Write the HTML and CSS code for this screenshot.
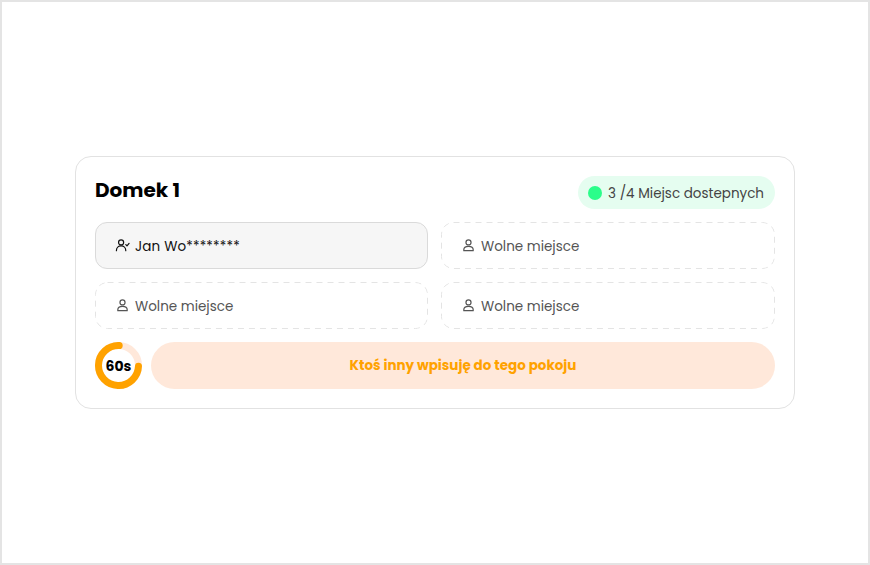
FILE: index.html
```html
<!DOCTYPE html>
<html lang="pl">
<head>
    <meta charset="UTF-8">
    <meta name="viewport" content="width=device-width, initial-scale=1.0">
    <title>Domek 1</title>
    <link rel="stylesheet" href="styles.css">
</head>
<body>
    <div class="frame">
        <div class="room-card">
            <div class="room-header">
                <h2>Domek 1</h2>
                <div class="availability">
                    <span class="availability-dot"></span>
                    <span class="availability-text">3 /4 Miejsc dostepnych</span>
                </div>
            </div>

            <div class="seat-grid">
                <div class="seat seat-taken">
                    <svg class="seat-icon" viewBox="0 0 16 16"><circle cx="6.500" cy="4.700" r="2.700"/><path d="M1.500 13.500c0-3 2.200-5 5-5s5 2 5 5"/><path d="m11.500 7 1.300 1.300 2.200-2.600"/></svg>
                    <span class="seat-name">Jan Wo********</span>
                </div>
                <div class="seat">
                    <svg class="seat-icon" viewBox="0 0 16 16"><circle cx="8" cy="4.700" r="2.700"/><path d="M3 13.500v-1c0-2 1.800-3.500 5-3.500s5 1.500 5 3.500v1z"/></svg>
                    <span class="seat-name">Wolne miejsce</span>
                </div>
                <div class="seat">
                    <svg class="seat-icon" viewBox="0 0 16 16"><circle cx="8" cy="4.700" r="2.700"/><path d="M3 13.500v-1c0-2 1.800-3.500 5-3.500s5 1.500 5 3.500v1z"/></svg>
                    <span class="seat-name">Wolne miejsce</span>
                </div>
                <div class="seat">
                    <svg class="seat-icon" viewBox="0 0 16 16"><circle cx="8" cy="4.700" r="2.700"/><path d="M3 13.500v-1c0-2 1.800-3.500 5-3.500s5 1.500 5 3.500v1z"/></svg>
                    <span class="seat-name">Wolne miejsce</span>
                </div>
            </div>

            <div class="room-footer">
                <div class="timer">
                    <svg viewBox="0 0 47 47"><circle class="timer-track" cx="23.500" cy="23.500" r="20"/><circle class="timer-fill" cx="23.500" cy="23.500" r="20" pathLength="100" stroke-dasharray="75 100" transform="rotate(2 23.500 23.500)"/></svg>
                    <span class="timer-label">60s</span>
                </div>
                <div class="notice">Ktoś inny wpisuję do tego pokoju</div>
            </div>
        </div>
    </div>
</body>
</html>
```

FILE: styles.css
```css
* {
    box-sizing: border-box;
}

body {
    margin: 0;
    background: #fff;
    color: #000;
    font-family: 'Poppins', 'Inter', 'Open Sans', sans-serif;
}

.frame {
    width: 870px;
    height: 565px;
    border: 2px solid #e4e4e4;
    display: flex;
    align-items: center;
    justify-content: center;
}

.room-card {
    width: 720px;
    height: 253px;
    padding: 19px;
    border: 1px solid #e2e2e2;
    border-radius: 16px;
    display: flex;
    flex-direction: column;
    gap: 13px;
}

.room-header {
    display: flex;
    justify-content: space-between;
    align-items: flex-start;
    height: 33px;
}

.room-header h2 {
    margin: 0;
    font-size: 20px;
    line-height: 28px;
    font-weight: 700;
}

.availability {
    display: flex;
    align-items: center;
    gap: 6px;
    height: 33px;
    padding: 0 11px 0 10px;
    border-radius: 17px;
    background: #e5fdf0;
    font-size: 13.500px;
    color: #444;
}

.availability-text {
    padding-top: 2px;
}

.availability-dot {
    width: 14px;
    height: 14px;
    border-radius: 50%;
    background: #2bfd8a;
}

.seat-grid {
    display: grid;
    grid-template-columns: 333px 1fr;
    gap: 13px;
}

.seat {
    display: flex;
    align-items: center;
    gap: 5px;
    height: 47px;
    padding: 0 20px;
    border-radius: 12px;
    background: url("data:image/svg+xml,%3Csvg xmlns='http://www.w3.org/2000/svg' width='100%25' height='100%25'%3E%3Crect x='.5' y='.5' width='calc(100%25 - 1px)' height='calc(100%25 - 1px)' rx='12' fill='none' stroke='%23e4e4e4' stroke-dasharray='6 5'/%3E%3C/svg%3E");
    font-size: 13.500px;
    color: #555;
}

.seat-name {
    padding-top: 2px;
}

.seat-taken {
    background: #f6f6f6;
    border: 1px solid #dadada;
    padding: 0 19px;
    letter-spacing: 0.15px;
    color: #111;
}

.seat-icon {
    width: 15px;
    height: 15px;
    fill: none;
    stroke: currentColor;
    stroke-width: 1.300;
    stroke-linecap: round;
    stroke-linejoin: round;
}

.room-footer {
    display: flex;
    align-items: center;
    gap: 9px;
}

.timer {
    position: relative;
    width: 47px;
    height: 47px;
}

.timer svg {
    display: block;
    width: 47px;
    height: 47px;
    fill: none;
}

.timer-track {
    stroke: #ffe8da;
    stroke-width: 7;
}

.timer-fill {
    stroke: #ffa200;
    stroke-width: 7;
    stroke-linecap: round;
}

.timer-label {
    position: absolute;
    inset: 0;
    padding-top: 2px;
    display: flex;
    align-items: center;
    justify-content: center;
    font-size: 14px;
    font-weight: 700;
}

.notice {
    flex: 1;
    height: 47px;
    padding-top: 1px;
    display: flex;
    align-items: center;
    justify-content: center;
    border-radius: 24px;
    background: #ffe8da;
    color: #ffa200;
    font-size: 13.500px;
    font-weight: 700;
}
```
